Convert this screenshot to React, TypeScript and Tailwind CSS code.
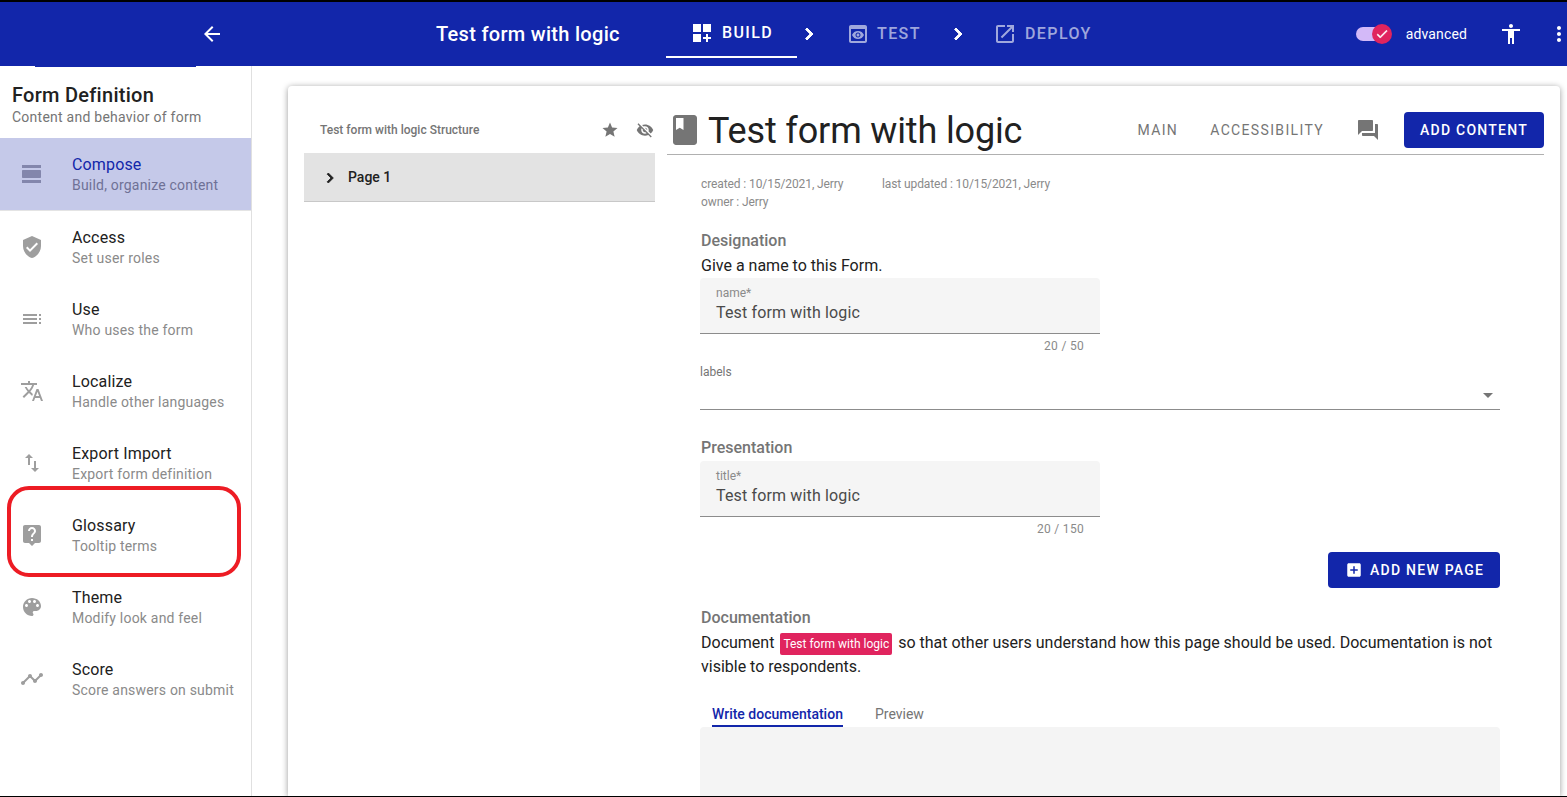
const ICONS = {
  back: 'M20 11H7.83l5.59-5.59L12 4l-8 8 8 8 1.41-1.41L7.83 13H20v-2z',
  build: 'M3 3h8v8H3zm10 0h8v8h-8zM3 13h8v8H3zm15 0h-2v3h-3v2h3v3h2v-3h3v-2h-3z',
  test: 'M19 3H5c-1.11 0-2 .9-2 2v14c0 1.1.89 2 2 2h14c1.1 0 2-.9 2-2V5c0-1.1-.89-2-2-2zm0 16H5V7h14v12zm-5.5-6c0 .83-.67 1.5-1.5 1.5s-1.5-.67-1.5-1.5.67-1.5 1.5-1.5 1.5.67 1.5 1.5zM12 9c-2.73 0-5.06 1.66-6 4 .94 2.34 3.27 4 6 4s5.06-1.66 6-4c-.94-2.34-3.27-4-6-4zm0 6.5c-1.38 0-2.5-1.12-2.5-2.5s1.12-2.5 2.5-2.5 2.5 1.12 2.5 2.5-1.12 2.5-2.5 2.5z',
  deploy: 'M19 19H5V5h7V3H5c-1.11 0-2 .9-2 2v14c0 1.1.89 2 2 2h14c1.1 0 2-.9 2-2v-7h-2v7zM14 3v2h3.59l-9.83 9.83 1.41 1.41L19 6.41V10h2V3h-7z',
  chevron: 'M10 6L8.59 7.41 13.17 12l-4.58 4.59L10 18l6-6z',
  check: 'M9 16.17L4.83 12l-1.42 1.41L9 19 21 7l-1.41-1.41z',
  person: 'M12 2c1.1 0 2 .9 2 2s-.9 2-2 2-2-.9-2-2 .9-2 2-2zm9 7h-6v13h-2v-6h-2v6H9V9H3V7h18v2z',
  more: 'M12 8c1.1 0 2-.9 2-2s-.9-2-2-2-2 .9-2 2 .9 2 2 2zm0 2c-1.1 0-2 .9-2 2s.9 2 2 2 2-.9 2-2-.9-2-2-2zm0 6c-1.1 0-2 .9-2 2s.9 2 2 2 2-.9 2-2-.9-2-2-2z',
  compose: 'M2 21h19v-3H2v3zM20 8H3c-.55 0-1 .45-1 1v6c0 .55.45 1 1 1h17c.55 0 1-.45 1-1V9c0-.55-.45-1-1-1zM2 3v3h19V3H2z',
  access: 'M12 1L3 5v6c0 5.55 3.84 10.74 9 12 5.16-1.26 9-6.45 9-12V5l-9-4zm-2 16l-4-4 1.41-1.41L10 14.17l6.59-6.59L18 9l-8 8z',
  use: 'M3 7h14v2H3zm0 4h14v2H3zm0 4h14v2H3zM19 7h2v2h-2zm0 4h2v2h-2zm0 4h2v2h-2z',
  localize: 'M12.87 15.07l-2.54-2.51.03-.03c1.74-1.94 2.98-4.17 3.71-6.53H17V4h-7V2H8v2H1v1.99h11.17C11.5 7.92 10.44 9.75 9 11.35 8.07 10.32 7.3 9.19 6.69 8h-2c.73 1.63 1.73 3.17 2.98 4.56l-5.09 5.02L4 19l5-5 3.11 3.11.76-2.04zM18.5 10h-2L12 22h2l1.12-3h4.75L21 22h2l-4.5-12zm-2.62 7l1.62-4.33L19.12 17h-3.24z',
  exportImport: 'M9 3L5 6.99h3V14h2V6.99h3L9 3zm7 14.01V10h-2v7.01h-3L15 21l4-3.99h-3z',
  glossary: 'M19 2H5c-1.11 0-2 .9-2 2v14c0 1.1.89 2 2 2h4l3 3 3-3h4c1.1 0 2-.9 2-2V4c0-1.1-.9-2-2-2zm-6 16h-2v-2h2v2zm2.07-7.75l-.9.92C13.45 11.9 13 12.5 13 14h-2v-.5c0-1.1.45-2.1 1.17-2.83l1.24-1.26c.37-.36.59-.86.59-1.41 0-1.1-.9-2-2-2s-2 .9-2 2H8c0-2.21 1.79-4 4-4s4 1.79 4 4c0 .88-.36 1.68-.93 2.25z',
  theme: 'M12 3c-4.97 0-9 4.03-9 9s4.03 9 9 9c.83 0 1.5-.67 1.5-1.5 0-.39-.15-.74-.39-1.01-.23-.26-.38-.61-.38-.99 0-.83.67-1.5 1.5-1.5H16c2.76 0 5-2.24 5-5 0-4.42-4.03-8-9-8zm-5.5 9c-.83 0-1.5-.67-1.5-1.5S5.67 9 6.5 9 8 9.67 8 10.5 7.33 12 6.5 12zm3-4C8.67 8 8 7.33 8 6.5S8.67 5 9.5 5s1.5.67 1.5 1.5S10.33 8 9.5 8zm5 0c-.83 0-1.5-.67-1.5-1.5S13.67 5 14.5 5s1.5.67 1.5 1.5S15.33 8 14.5 8zm3 4c-.83 0-1.5-.67-1.5-1.5S16.67 9 17.5 9s1.5.67 1.5 1.5-.67 1.5-1.5 1.5z',
  score: 'M23 8c0 1.1-.9 2-2 2-.18 0-.35-.02-.51-.07l-3.56 3.55c.05.16.07.34.07.52 0 1.1-.9 2-2 2s-2-.9-2-2c0-.18.02-.36.07-.52l-2.55-2.55c-.16.05-.34.07-.52.07s-.36-.02-.52-.07l-4.55 4.56c.05.16.07.33.07.51 0 1.1-.9 2-2 2s-2-.9-2-2 .9-2 2-2c.18 0 .35.02.51.07l4.56-4.55C8.02 9.36 8 9.18 8 9c0-1.1.9-2 2-2s2 .9 2 2c0 .18-.02.36-.07.52l2.55 2.55c.16-.05.34-.07.52-.07s.36.02.52.07l3.55-3.56C19.02 8.35 19 8.18 19 8c0-1.1.9-2 2-2s2 .9 2 2z',
  star: 'M12 17.27L18.18 21l-1.64-7.03L22 9.24l-7.19-.61L12 2 9.19 8.63 2 9.24l5.46 4.73L5.82 21z',
  hidden: 'M12 7c2.76 0 5 2.24 5 5 0 .65-.13 1.26-.36 1.83l2.92 2.92c1.51-1.26 2.7-2.89 3.43-4.75-1.73-4.39-6-7.5-11-7.5-1.4 0-2.74.25-3.98.7l2.16 2.16C10.74 7.13 11.35 7 12 7zM2 4.27l2.28 2.28.46.46C3.08 8.3 1.78 10.02 1 12c1.73 4.39 6 7.5 11 7.5 1.55 0 3.03-.3 4.38-.84l.42.42L19.73 22 21 20.73 3.27 3 2 4.27zM7.53 9.8l1.55 1.55c-.05.21-.08.43-.08.65 0 1.66 1.34 3 3 3 .22 0 .44-.03.65-.08l1.55 1.55c-.67.33-1.41.53-2.2.53-2.76 0-5-2.24-5-5 0-.79.2-1.53.53-2.2zm4.31-.78l3.15 3.15.02-.16c0-1.66-1.34-3-3-3l-.17.01z',
  book: 'M18 2H6c-1.1 0-2 .9-2 2v16c0 1.1.9 2 2 2h12c1.1 0 2-.9 2-2V4c0-1.1-.9-2-2-2zM6 4h5v8l-2.5-1.5L6 12V4z',
  forum: 'M21 6h-2v9H6v2c0 .55.45 1 1 1h11l4 4V7c0-.55-.45-1-1-1zm-4 6V3c0-.55-.45-1-1-1H3c-.55 0-1 .45-1 1v14l4-4h10c.55 0 1-.45 1-1z',
  addBox: 'M19 3H5c-1.11 0-2 .9-2 2v14c0 1.1.89 2 2 2h14c1.1 0 2-.9 2-2V5c0-1.1-.9-2-2-2zm-2 10h-4v4h-2v-4H7v-2h4V7h2v4h4v2z'
}

const MENU: { icon: keyof typeof ICONS; title: string; sub: string }[] = [
  { icon: 'access', title: 'Access', sub: 'Set user roles' },
  { icon: 'use', title: 'Use', sub: 'Who uses the form' },
  { icon: 'localize', title: 'Localize', sub: 'Handle other languages' },
  { icon: 'exportImport', title: 'Export Import', sub: 'Export form definition' },
  { icon: 'glossary', title: 'Glossary', sub: 'Tooltip terms' },
  { icon: 'theme', title: 'Theme', sub: 'Modify look and feel' },
  { icon: 'score', title: 'Score', sub: 'Score answers on submit' }
]

function Icon({ name, className }: { name: keyof typeof ICONS; className: string }) {
  return (
    <svg viewBox="0 0 24 24" fill="currentColor" className={className}>
      <path d={ICONS[name]} />
    </svg>
  )
}

function Header() {
  return (
    <header className="flex h-16 flex-none items-center overflow-hidden bg-[#1226aa] text-white">
      <Icon name="back" className="ml-[200px] h-6 w-6 flex-none" />
      <div className="ml-[212px] w-[183px] flex-none whitespace-nowrap text-xl font-medium tracking-[0.3px]">Test form with logic</div>
      <div className="ml-[47px] flex h-14 w-[131px] flex-none items-center self-start border-b-2 border-white pl-[24px] pt-[8px]">
        <Icon name="build" className="h-6 w-6 flex-none" />
        <span className="ml-[8px] text-base font-medium tracking-[1.4px]">BUILD</span>
      </div>
      <Icon name="chevron" className="h-6 w-6 flex-none stroke-current stroke-1" />
      <div className="ml-[25px] flex w-[100px] flex-none items-center text-white/60">
        <Icon name="test" className="h-6 w-6 flex-none" />
        <span className="ml-[7px] text-base font-medium tracking-[1.4px]">TEST</span>
      </div>
      <Icon name="chevron" className="h-6 w-6 flex-none stroke-current stroke-1" />
      <div className="ml-[23px] flex flex-none items-center text-white/60">
        <Icon name="deploy" className="h-6 w-6 flex-none" />
        <span className="ml-[8px] text-base font-medium tracking-[1.4px]">DEPLOY</span>
      </div>
      <div className="ml-[264px] flex flex-none items-center">
        <div className="h-[14px] w-[24px] rounded-l-full bg-[#d3b9f8]" />
        <div className="ml-[-8px] flex h-5 w-5 items-center justify-center rounded-full bg-[#e0245e] text-white">
          <Icon name="check" className="h-[14px] w-[14px] stroke-current stroke-1" />
        </div>
      </div>
      <span className="ml-[14px] flex-none text-sm tracking-[0.15px]">advanced</span>
      <Icon name="person" className="ml-[32px] h-6 w-6 flex-none" />
      <Icon name="more" className="ml-[24px] h-6 w-6 flex-none" />
    </header>
  )
}

function MenuItem({ icon, title, sub }: { icon: keyof typeof ICONS; title: string; sub: string }) {
  return (
    <div className="flex h-[72px] items-center">
      <Icon name={icon} className="ml-[20px] h-6 w-6 flex-none text-[#9e9e9e]" />
      <div className="ml-[28px]">
        <div className="pt-px text-base leading-[22px] tracking-[0.15px] text-[#212121]">{title}</div>
        <div className="text-sm leading-[19px] tracking-[0.2px] text-[#8a8a8a]">{sub}</div>
      </div>
    </div>
  )
}

function Sidebar() {
  return (
    <aside className="relative w-[252px] flex-none border-r border-[#e0e0e0]">
      <div className="ml-[35px] h-px w-[161px] bg-[#1226aa]" />
      <div className="pl-[12px] pt-[16px]">
        <div className="text-xl font-medium leading-[24px] tracking-[0.27px] text-[#212121]">Form Definition</div>
        <div className="text-sm leading-[20px] tracking-[0.25px] text-[#757575]">Content and behavior of form</div>
      </div>
      <div className="mt-[11px] flex h-[73px] items-center border-b border-[#e4e4e4] bg-[#c5c9e9]">
        <Icon name="compose" className="ml-[20px] h-6 w-6 flex-none text-[#8386ac]" />
        <div className="ml-[28px]">
          <div className="pt-px text-base leading-[22px] tracking-[0.15px] text-[#1226aa]">Compose</div>
          <div className="text-sm leading-[19px] tracking-[0.2px] text-[#6f7196]">Build, organize content</div>
        </div>
      </div>
      {MENU.map((m) => (
        <MenuItem key={m.title} {...m} />
      ))}
      {/* annotation drawn over the Glossary row */}
      <div className="absolute left-[7px] top-[420px] h-[91px] w-[234px] rounded-[22px] border-4 border-[#ed1c24]" />
    </aside>
  )
}

function TextField({ label, value, count }: { label: string; value: string; count: string }) {
  return (
    <>
      <div className="h-14 w-[400px] rounded-t border-b border-[#8c8c8c] bg-[#f5f5f5] pl-[16px] pt-[7px]">
        <div className="text-xs leading-[16px] text-[#8a8a8a]">{label}</div>
        <div className="pt-px text-base leading-[22px] tracking-[0.15px] text-[#4a4a4a]">{value}</div>
      </div>
      <div className="w-[400px] pr-[16px] text-right text-xs leading-[24px] tracking-[0.3px] text-[#8a8a8a]">{count}</div>
    </>
  )
}

function StructurePanel() {
  return (
    <div className="ml-[16px] w-[351px] flex-none">
      <div className="flex h-[67px] items-center pl-[16px] pt-[20px]">
        <span className="text-xs font-medium text-[#757575]">Test form with logic Structure</span>
        <Icon name="star" className="ml-auto mr-[17px] h-[18px] w-[18px] text-[#757575]" />
        <Icon name="hidden" className="mr-px h-[18px] w-[18px] text-[#757575]" />
      </div>
      <div className="flex h-[49px] items-center border-b border-[#c8c8c8] bg-[#e3e3e3] pl-[16px]">
        <Icon name="chevron" className="mt-px h-5 w-5 stroke-current stroke-1 text-[#212121]" />
        <span className="ml-[8px] text-sm font-medium text-[#212121]">Page 1</span>
      </div>
    </div>
  )
}

function FormPanel() {
  return (
    <div className="ml-[12px] w-[877px] flex-none">
      <div className="mt-[26px] flex h-[43px] items-center border-b border-[#b0b0b0] pb-[6px]">
        <Icon name="book" className="h-9 w-9 flex-none text-[#757575]" />
        <span className="ml-[5px] mt-[2px] whitespace-nowrap text-4xl leading-[36px] tracking-[-0.15px] text-[#212121]">Test form with logic</span>
        <span className="ml-auto text-sm tracking-[1.35px] text-[#757575]">MAIN</span>
        <span className="ml-[32px] text-sm tracking-[1.35px] text-[#757575]">ACCESSIBILITY</span>
        <Icon name="forum" className="ml-[32px] h-6 w-6 text-[#757575]" />
        <div className="ml-[24px] flex h-9 w-[140px] items-center justify-center rounded bg-[#1226aa] text-sm font-medium tracking-[1.25px] text-white">ADD CONTENT</div>
      </div>
      <div className="pl-[33px]">
        <div className="ml-px mt-[20px] flex text-xs leading-[18px] tracking-[-0.1px] text-[#8a8a8a]">
          <span className="w-[181px]">created : 10/15/2021, Jerry</span>
          <span>last updated : 10/15/2021, Jerry</span>
        </div>
        <div className="ml-px text-xs leading-[18px] tracking-[-0.1px] text-[#8a8a8a]">owner : Jerry</div>
        <div className="ml-px mt-[18px] text-base font-medium leading-[24px] text-[#757575]">Designation</div>
        <div className="ml-px text-base leading-[25px] text-[#212121]">Give a name to this Form.</div>
        <TextField label="name*" value="Test form with logic" count="20 / 50" />
        <div className="mt-[6px] text-xs leading-[16px] text-[#757575]">labels</div>
        <div className="relative h-[30px] w-[800px] border-b border-[#8c8c8c]">
          <div className="absolute right-[7px] top-[13px] h-0 w-0 border-x-[5px] border-t-[5px] border-x-transparent border-t-[#757575]" />
        </div>
        <div className="ml-px mt-[26px] text-base font-medium leading-[24px] text-[#757575]">Presentation</div>
        <div className="h-px" />
        <TextField label="title*" value="Test form with logic" count="20 / 150" />
        <div className="mt-[11px] flex w-[800px] justify-end">
          <div className="flex h-9 w-[172px] items-center rounded bg-[#1226aa] pl-[17px] text-sm font-medium tracking-[1.25px] text-white">
            <Icon name="addBox" className="h-[18px] w-[18px]" />
            <span className="ml-[7px]">ADD NEW PAGE</span>
          </div>
        </div>
        <div className="ml-px mt-[18px] text-base font-medium leading-[24px] text-[#757575]">Documentation</div>
        <div className="ml-px mt-px w-[799px] text-base leading-[24px] text-[#212121]">
          Document
          <span className="mx-[6px] rounded-[2px] bg-[#e0245e] px-[3px] py-[4px] text-xs text-white">Test form with logic</span>
          so that other users understand how this page should be used. Documentation is not visible to respondents.
        </div>
        <div className="ml-[12px] mt-[25px] flex text-sm">
          <span className="border-b-2 border-[#1226aa] pb-px font-medium leading-[20px] text-[#1226aa]">Write documentation</span>
          <span className="ml-[32px] leading-[20px] text-[#757575]">Preview</span>
        </div>
        <div className="h-[120px] w-[800px] rounded bg-[#f4f4f4]" />
      </div>
    </div>
  )
}

export default function App() {
  return (
    <div className="flex h-[797px] w-[1567px] flex-col overflow-hidden border-t-2 border-b border-t-black border-b-black bg-white font-['Roboto',sans-serif]">
      <Header />
      <div className="flex min-h-0 flex-1">
        <Sidebar />
        <div className="ml-[36px] mt-[20px] flex w-[1272px] flex-none rounded-t bg-white shadow-[0_1px_6px_rgba(0,0,0,0.4)]">
          <StructurePanel />
          <FormPanel />
        </div>
      </div>
    </div>
  )
}
